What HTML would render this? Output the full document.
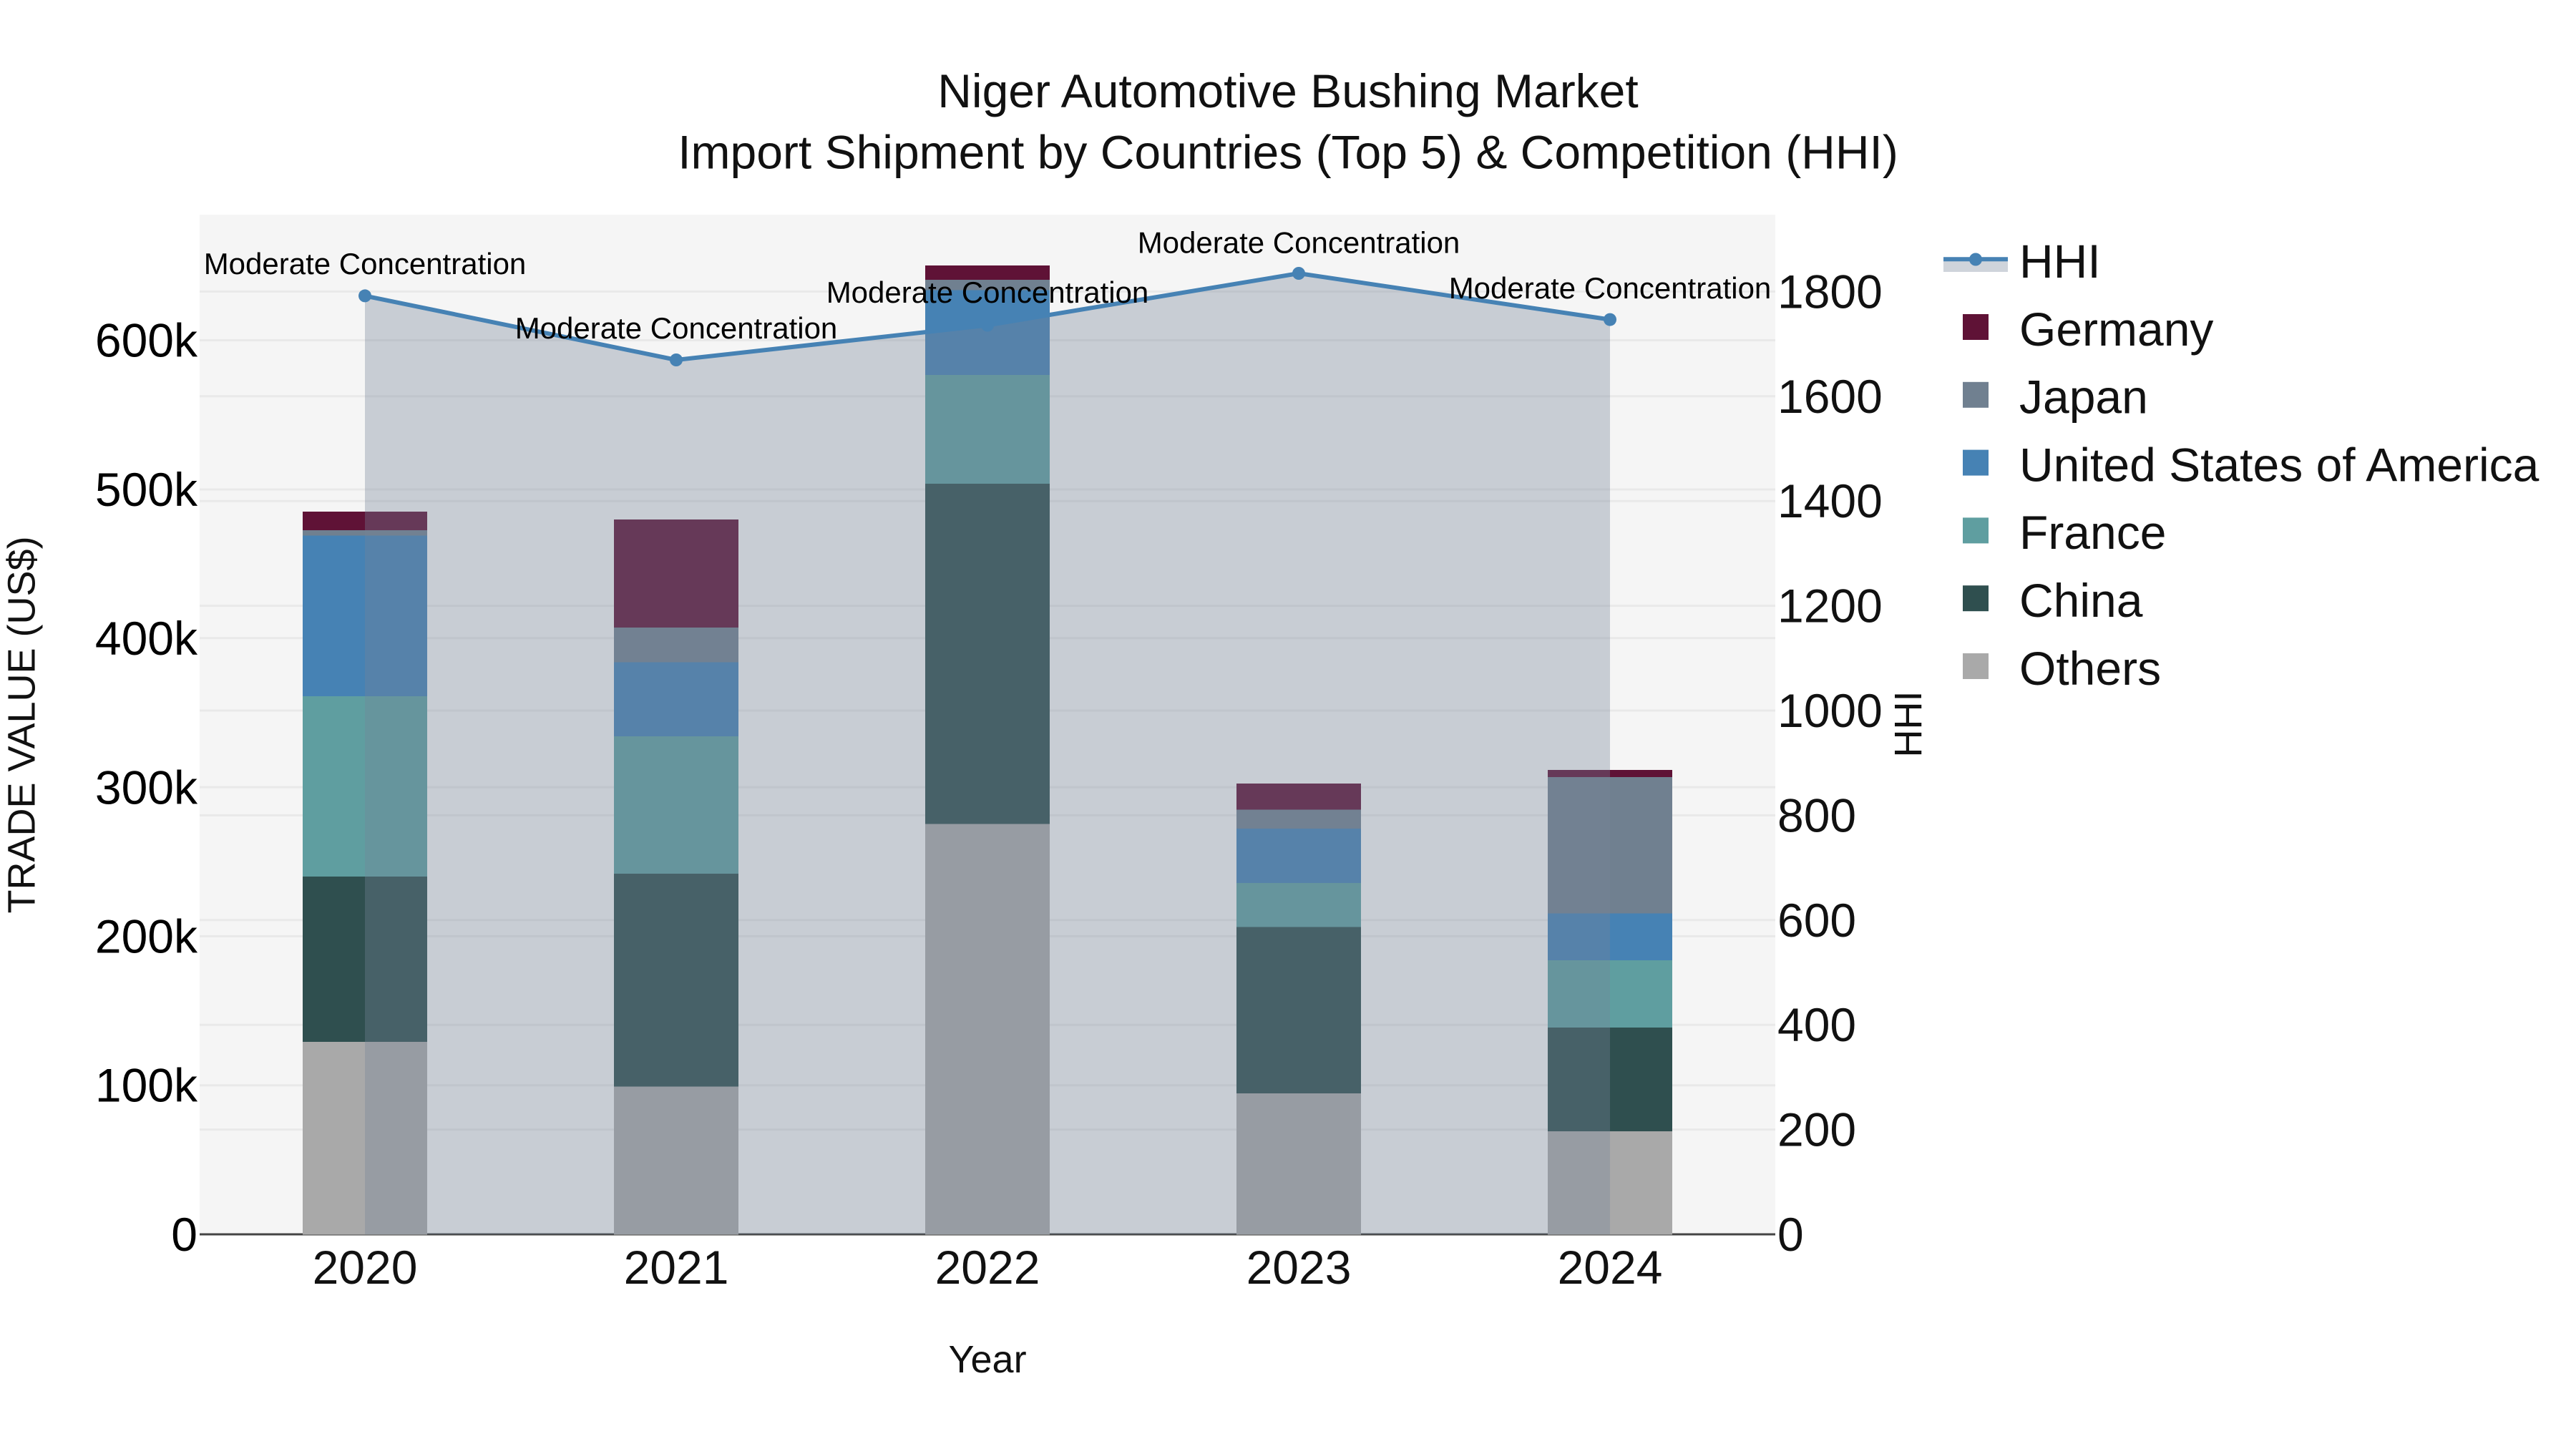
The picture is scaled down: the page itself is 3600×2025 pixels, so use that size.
<!DOCTYPE html>
<html lang="en">
<head>
<meta charset="utf-8">
<title>Niger Automotive Bushing Market</title>
<style>
html,body{margin:0;padding:0;background:#fff;width:3600px;height:2025px;overflow:hidden}
svg{display:block}
text{font-family:"Liberation Sans",Arial,sans-serif;white-space:pre}
.t{font-size:66px;fill:#111}
.l{font-size:66px;fill:#000;text-anchor:end}
.r{font-size:66px;fill:#111}
.x{font-size:66px;fill:#111;text-anchor:middle}
.a{font-size:42px;fill:#000;text-anchor:middle}
.g{stroke:#e9e9e9;stroke-width:3}
.ge{fill:#5f1236}.ja{fill:#708090}.us{fill:#4682b4}.fr{fill:#5f9ea0}.cn{fill:#2f4f4f}.ot{fill:#a9a9a9}
</style>
</head>
<body>
<svg xmlns="http://www.w3.org/2000/svg" width="3600" height="2025" viewBox="0 0 3600 2025">
<rect width="3600" height="2025" fill="#fff"/>
<rect x="279" y="300" width="2202" height="1425" fill="#f5f5f5"/>

<!-- gridlines left axis -->
<g class="g">
<line x1="279" x2="2481" y1="1516.7" y2="1516.7"/>
<line x1="279" x2="2481" y1="1308.4" y2="1308.4"/>
<line x1="279" x2="2481" y1="1100.1" y2="1100.1"/>
<line x1="279" x2="2481" y1="891.8" y2="891.8"/>
<line x1="279" x2="2481" y1="684" y2="684"/>
<line x1="279" x2="2481" y1="475.5" y2="475.5"/>
<!-- gridlines right axis -->
<line x1="279" x2="2481" y1="1578.6" y2="1578.6"/>
<line x1="279" x2="2481" y1="1432.2" y2="1432.2"/>
<line x1="279" x2="2481" y1="1285.8" y2="1285.8"/>
<line x1="279" x2="2481" y1="1139.4" y2="1139.4"/>
<line x1="279" x2="2481" y1="993" y2="993"/>
<line x1="279" x2="2481" y1="846.6" y2="846.6"/>
<line x1="279" x2="2481" y1="700.2" y2="700.2"/>
<line x1="279" x2="2481" y1="553.8" y2="553.8"/>
<line x1="279" x2="2481" y1="407.4" y2="407.4"/>
</g>

<!-- zero line -->
<rect x="279" y="1723.5" width="2202" height="3" fill="#444"/>

<!-- bars 2020 -->
<g shape-rendering="crispEdges">
<rect class="ge" x="423" y="715" width="174" height="25.9"/>
<rect class="ja" x="423" y="740.9" width="174" height="7.6"/>
<rect class="us" x="423" y="748.5" width="174" height="224.5"/>
<rect class="fr" x="423" y="973" width="174" height="251.9"/>
<rect class="cn" x="423" y="1224.9" width="174" height="231.3"/>
<rect class="ot" x="423" y="1456.2" width="174" height="269.3"/>
<!-- bars 2021 -->
<rect class="ge" x="858" y="726" width="174" height="151"/>
<rect class="ja" x="858" y="877" width="174" height="48.5"/>
<rect class="us" x="858" y="925.5" width="174" height="103.5"/>
<rect class="fr" x="858" y="1029" width="174" height="192"/>
<rect class="cn" x="858" y="1221" width="174" height="297.4"/>
<rect class="ot" x="858" y="1518.4" width="174" height="207.1"/>
<!-- bars 2022 -->
<rect class="ge" x="1293" y="371" width="174" height="20"/>
<rect class="ja" x="1293" y="391" width="174" height="14.3"/>
<rect class="us" x="1293" y="405.3" width="174" height="118.7"/>
<rect class="fr" x="1293" y="524" width="174" height="152"/>
<rect class="cn" x="1293" y="676" width="174" height="475.3"/>
<rect class="ot" x="1293" y="1151.3" width="174" height="574.2"/>
<!-- bars 2023 -->
<rect class="ge" x="1728" y="1095" width="174" height="36.7"/>
<rect class="ja" x="1728" y="1131.7" width="174" height="26.3"/>
<rect class="us" x="1728" y="1158" width="174" height="76"/>
<rect class="fr" x="1728" y="1234" width="174" height="61.3"/>
<rect class="cn" x="1728" y="1295.3" width="174" height="233"/>
<rect class="ot" x="1728" y="1528" width="174" height="197.5"/>
<!-- bars 2024 -->
<rect class="ge" x="2163" y="1076" width="174" height="10.2"/>
<rect class="ja" x="2163" y="1086.2" width="174" height="190.3"/>
<rect class="us" x="2163" y="1276.5" width="174" height="65.3"/>
<rect class="fr" x="2163" y="1341.8" width="174" height="94.4"/>
<rect class="cn" x="2163" y="1436.2" width="174" height="144.8"/>
<rect class="ot" x="2163" y="1581" width="174" height="144.5"/>
</g>

<!-- HHI area -->
<polygon points="510,413.4 945,503 1380,454.5 1815,382 2250,446.6 2250,1725 510,1725" fill="rgb(118,132,152)" fill-opacity="0.35"/>
<!-- HHI line -->
<polyline points="510,413.4 945,503 1380,454.5 1815,382 2250,446.6" fill="none" stroke="#4682b4" stroke-width="6" stroke-linejoin="round"/>
<g fill="#4682b4">
<circle cx="510" cy="413.4" r="9"/>
<circle cx="945" cy="503" r="9"/>
<circle cx="1380" cy="454.5" r="9"/>
<circle cx="1815" cy="382" r="9"/>
<circle cx="2250" cy="446.6" r="9"/>
</g>

<!-- annotations -->
<text class="a" x="510" y="383">Moderate Concentration</text>
<text class="a" x="945" y="473">Moderate Concentration</text>
<text class="a" x="1380" y="423">Moderate Concentration</text>
<text class="a" x="1815" y="353.5">Moderate Concentration</text>
<text class="a" x="2250" y="417">Moderate Concentration</text>

<!-- title -->
<text class="t" x="1800" y="150" text-anchor="middle">Niger Automotive Bushing Market</text>
<text class="t" x="1800" y="235.5" text-anchor="middle">Import Shipment by Countries (Top 5) &amp; Competition (HHI)</text>

<!-- left ticks -->
<text class="l" x="276" y="498.5">600k</text>
<text class="l" x="276" y="706.8">500k</text>
<text class="l" x="276" y="915">400k</text>
<text class="l" x="276" y="1123.3">300k</text>
<text class="l" x="276" y="1331.6">200k</text>
<text class="l" x="276" y="1539.7">100k</text>
<text class="l" x="276" y="1748">0</text>

<!-- right ticks -->
<text class="r" x="2484" y="430.4">1800</text>
<text class="r" x="2484" y="576.8">1600</text>
<text class="r" x="2484" y="723.2">1400</text>
<text class="r" x="2484" y="869.6">1200</text>
<text class="r" x="2484" y="1016">1000</text>
<text class="r" x="2484" y="1162.4">800</text>
<text class="r" x="2484" y="1308.8">600</text>
<text class="r" x="2484" y="1455.2">400</text>
<text class="r" x="2484" y="1601.6">200</text>
<text class="r" x="2484" y="1748">0</text>

<!-- x ticks -->
<text class="x" x="510" y="1794">2020</text>
<text class="x" x="945" y="1794">2021</text>
<text class="x" x="1380" y="1794">2022</text>
<text class="x" x="1815" y="1794">2023</text>
<text class="x" x="2250" y="1794">2024</text>

<!-- axis titles -->
<text x="1380" y="1918" font-size="54" fill="#111" text-anchor="middle">Year</text>
<text transform="translate(48.5,1013) rotate(-90)" font-size="54" fill="#111" text-anchor="middle">TRADE VALUE (US$)</text>
<text transform="translate(2685,1012) rotate(-90)" font-size="54" fill="#111" text-anchor="middle">HHI</text>

<!-- legend -->
<rect x="2716" y="362" width="90" height="18" fill="rgb(118,132,152)" fill-opacity="0.35"/>
<line x1="2716" x2="2806" y1="362.3" y2="362.3" stroke="#4682b4" stroke-width="6"/>
<circle cx="2761" cy="362.5" r="9" fill="#4682b4"/>
<rect class="ge" x="2743" y="439" width="36" height="36"/>
<rect class="ja" x="2743" y="533.8" width="36" height="36"/>
<rect class="us" x="2743" y="628.6" width="36" height="36"/>
<rect class="fr" x="2743" y="723.4" width="36" height="36"/>
<rect class="cn" x="2743" y="818.2" width="36" height="36"/>
<rect class="ot" x="2743" y="913" width="36" height="36"/>
<text class="r" x="2822" y="388">HHI</text>
<text class="r" x="2822" y="482.8">Germany</text>
<text class="r" x="2822" y="577.6">Japan</text>
<text class="r" x="2822" y="672.4">United States of America</text>
<text class="r" x="2822" y="767.2">France</text>
<text class="r" x="2822" y="862">China</text>
<text class="r" x="2822" y="956.8">Others</text>
</svg>
</body>
</html>
